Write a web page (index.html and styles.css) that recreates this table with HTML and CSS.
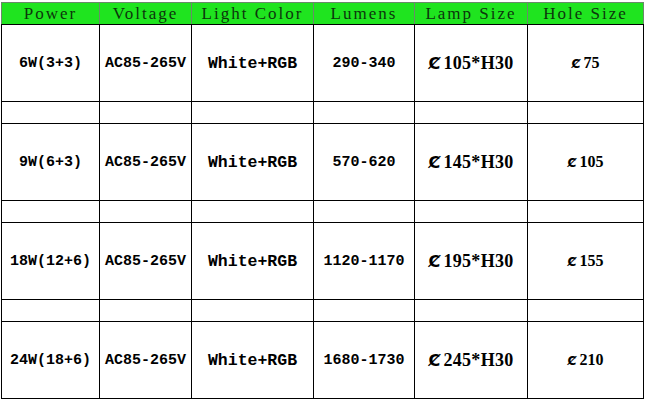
FILE: index.html
```html
<!DOCTYPE html>
<html>
<head>
<meta charset="utf-8">
<link rel="stylesheet" href="styles.css">
</head>
<body>
<div class="sheet">
<table class="spec">
  <colgroup>
    <col class="c1"><col class="c2"><col class="c3"><col class="c4"><col class="c5"><col class="c6">
  </colgroup>
  <thead>
    <tr class="head">
      <th>Power</th><th>Voltage</th><th>Light Color</th><th>Lumens</th><th>Lamp Size</th><th>Hole Size</th>
    </tr>
  </thead>
  <tbody>
    <tr class="data">
      <td class="mono">6W(3+3)</td><td class="mono">AC85-265V</td><td class="color">White+RGB</td><td class="mono">290-340</td><td class="lamp"><span class="phi">Ȼ</span>105*H30</td><td class="hole"><span class="cent">Ȼ</span>75</td>
    </tr>
    <tr class="gap"><td></td><td></td><td></td><td></td><td></td><td></td></tr>
    <tr class="data">
      <td class="mono">9W(6+3)</td><td class="mono">AC85-265V</td><td class="color">White+RGB</td><td class="mono">570-620</td><td class="lamp"><span class="phi">Ȼ</span>145*H30</td><td class="hole"><span class="cent">Ȼ</span>105</td>
    </tr>
    <tr class="gap"><td></td><td></td><td></td><td></td><td></td><td></td></tr>
    <tr class="data">
      <td class="mono">18W(12+6)</td><td class="mono">AC85-265V</td><td class="color">White+RGB</td><td class="mono">1120-1170</td><td class="lamp"><span class="phi">Ȼ</span>195*H30</td><td class="hole"><span class="cent">Ȼ</span>155</td>
    </tr>
    <tr class="gap"><td></td><td></td><td></td><td></td><td></td><td></td></tr>
    <tr class="data">
      <td class="mono">24W(18+6)</td><td class="mono">AC85-265V</td><td class="color">White+RGB</td><td class="mono">1680-1730</td><td class="lamp"><span class="phi">Ȼ</span>245*H30</td><td class="hole"><span class="cent">Ȼ</span>210</td>
    </tr>
  </tbody>
</table>
</div>
</body>
</html>
```
FILE: styles.css
```css
html, body {
  margin: 0;
  padding: 0;
  background: #ffffff;
}
.sheet {
  padding: 2px 0 0 1px;
}
.spec {
  border-collapse: collapse;
  table-layout: fixed;
  width: 642px;
}
.c1 { width: 98px; }
.c2 { width: 92px; }
.c3 { width: 122px; }
.c4 { width: 101px; }
.c5 { width: 113px; }
.c6 { width: 116px; }
.spec th, .spec td {
  padding: 0;
  text-align: center;
  vertical-align: middle;
  white-space: nowrap;
  overflow: hidden;
}
.head th {
  height: 21px;
  background: #1fe41f;
  color: #0c360c;
  font-family: "Liberation Serif", "DejaVu Serif", serif;
  font-size: 17px;
  letter-spacing: 2px;
  font-weight: normal;
  border: 1px solid #6a8a6a;
  border-bottom: 1px solid #000;
  line-height: 20px;
}
.spec td {
  border: 1px solid #000;
  color: #000;
}
.data td {
  height: 76px;
}
.gap td {
  height: 21px;
}
.mono {
  font-family: "Liberation Mono", "DejaVu Sans Mono", monospace;
  font-size: 15px;
  font-weight: bold;
}
.color {
  font-family: "Liberation Mono", "DejaVu Sans Mono", monospace;
  font-size: 16.5px;
  font-weight: bold;
}
.lamp {
  font-family: "Liberation Serif", "DejaVu Serif", serif;
  font-size: 18px;
  font-weight: bold;
  letter-spacing: 0.3px;
}
.hole {
  font-family: "Liberation Serif", "DejaVu Serif", serif;
  font-size: 16px;
  font-weight: bold;
}
.phi {
  font-family: "DejaVu Sans", sans-serif;
  font-size: 16px;
  font-weight: bold;
  margin-right: 3px;
}
.cent {
  font-family: "DejaVu Sans", sans-serif;
  font-size: 12px;
  font-weight: bold;
  margin-right: 3px;
}
```
